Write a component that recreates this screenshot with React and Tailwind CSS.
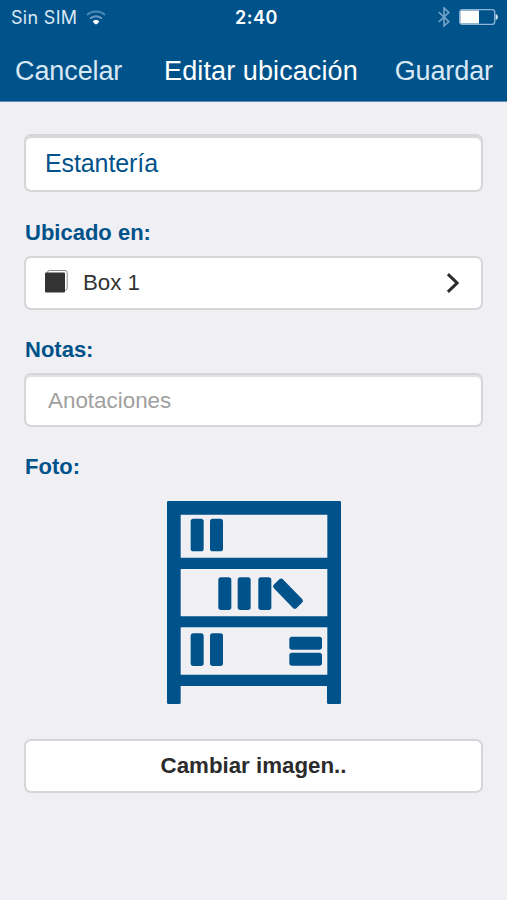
// App.jsx — StatusBar, NavBar, form fields and the location edit screen
import React from 'react';

function StatusBar() {
  return (
    <div className="grid grid-cols-[1fr_auto_1fr] items-center h-[35px] pl-[11px] pr-[9px] font-['Inter',sans-serif] text-[18px] text-[#d9e8f5]">
      <div className="flex items-center gap-[9px]">
        <span className="whitespace-nowrap tracking-[0.3px]">Sin SIM</span>
        <svg className="w-[20px] h-[15px] -mt-[1px]" viewBox="0 0 20 15" fill="none">
          <path d="M1 5C6 .4 14 .4 19 5" stroke="#4f88b5" strokeWidth="2" />
          <path d="M4.1 8.4c3.4-3 8.4-3 11.8 0" stroke="#6a9cc4" strokeWidth="2" />
          <path d="M6.9 11.6c.4-2 5.8-2 6.2 0 0 .8-2.2 2.9-3.1 2.9s-3.1-2.1-3.1-2.9z" fill="#fff" />
        </svg>
      </div>
      <span className="pl-[4px] text-center font-semibold tracking-[0.5px] text-white">2:40</span>
      <div className="flex items-center justify-end gap-[9px]">
        <svg className="w-[12px] h-[20px] -mt-[1px]" viewBox="0 0 12 20" fill="none" stroke="#6f9fc5" strokeWidth="1.7">
          <path d="M.8 5.2l10 9.4L6 19V1l4.8 4.4-10 9.4" />
        </svg>
        <svg className="w-[39px] h-[16px] -mt-[1px]" viewBox="0 0 39 16" fill="none">
          <rect x=".7" y=".7" width="35" height="14.6" rx="2.6" stroke="#8fb5d4" strokeWidth="1.3" />
          <path d="M3 1.4h17v13.2H3A1.5 1.5 0 0 1 1.4 13V3A1.5 1.5 0 0 1 3 1.4z" fill="#fff" />
          <path d="M36.6 5c3 .6 3 5.4 0 6z" fill="#d9e8f5" />
        </svg>
      </div>
    </div>
  );
}

function NavBar() {
  return (
    <div className="flex items-center justify-between h-[66px] pl-[15px] pr-[14px] pt-[6px] text-[27px] text-[#d9e8f5]">
      <button className="tracking-[-0.1px]">Cancelar</button>
      <h1 className="pl-[5px] tracking-[0.1px] text-white">Editar ubicación</h1>
      <button className="tracking-[-0.1px]">Guardar</button>
    </div>
  );
}

function Label({ children }) {
  return <span className="block pl-px text-[22px] leading-[26px] font-bold text-[#00528a]">{children}</span>;
}

function BoxIcon() {
  return (
    <svg className="w-[24px] h-[24px] -mt-[5px]" viewBox="0 0 24 24" fill="none">
      <rect x="2.5" y="1.5" width="19.7" height="19.7" rx="2" fill="#fff" stroke="#8a8a8a" />
      <rect x="0" y="3.5" width="20" height="20" rx="1" fill="#333" />
    </svg>
  );
}

function ShelfIcon() {
  return (
    <svg className="w-[174px] h-[203px]" viewBox="0 0 522 609" fill="#00528a">
      <path
        fillRule="evenodd"
        d="M4 0H518a4 4 0 0 1 4 4V605a4 4 0 0 1-4 4H484a4 4 0 0 1-4-4V555H41V605a4 4 0 0 1-4 4H4a4 4 0 0 1-4-4V4a4 4 0 0 1 4-4zM41 41V170H481V41zM41 204V346H481V204zM41 379V521H481V379z"
      />
      {/* top shelf */}
      <rect x="71" y="53" width="39" height="98" rx="8" />
      <rect x="129" y="53" width="39" height="98" rx="8" />
      {/* middle shelf */}
      <rect x="154" y="229" width="39" height="98" rx="8" />
      <rect x="212" y="229" width="39" height="98" rx="8" />
      <rect x="274" y="229" width="39" height="98" rx="8" />
      <rect x="344" y="229" width="38" height="98" rx="8" transform="rotate(-44 363 278)" />
      {/* bottom shelf */}
      <rect x="71" y="397" width="39" height="98" rx="8" />
      <rect x="129" y="397" width="39" height="98" rx="8" />
      <rect x="367" y="407" width="98" height="39" rx="8" />
      <rect x="367" y="455" width="98" height="39" rx="8" />
    </svg>
  );
}

export default function App() {
  const [name, setName] = React.useState('Estantería');
  const [notes, setNotes] = React.useState('');
  return (
    <div className="min-h-[900px] bg-[#efeff4] font-['Liberation_Sans',Arial,sans-serif]">
      <header className="h-[102px] bg-[#00528a] border-b border-[#5f8fb5]">
        <StatusBar />
        <NavBar />
      </header>

      <main className="flex flex-col px-[24px] pt-[32px]">
        <input
          value={name}
          onChange={(e) => setName(e.target.value)}
          className="w-full h-[58px] pl-[19px] rounded-[7px] border-2 border-[#d6d6d9] bg-white text-[25px] tracking-[-0.1px] text-[#00528a] shadow-[inset_0_2px_1px_#d6d6d8] outline-none"
        />

        <div className="mt-[28px]">
          <Label>Ubicado en:</Label>
          <button className="mt-[10px] flex items-center w-full h-[54px] pl-[19px] pr-[21px] rounded-[7px] border-2 border-[#d6d6d9] bg-white text-[22.3px] text-[#333]">
            <BoxIcon />
            <span className="ml-[14px]">Box 1</span>
            <svg className="ml-auto w-[14px] h-[20px]" viewBox="0 0 14 20" fill="none" stroke="#2b2b2b" strokeWidth="3">
              <path d="M1.9 1.2l9.2 8.8-9.2 8.8" />
            </svg>
          </button>
        </div>

        <div className="mt-[27px]">
          <Label>Notas:</Label>
          <input
            value={notes}
            onChange={(e) => setNotes(e.target.value)}
            placeholder="Anotaciones"
            className="mt-[10px] block w-full h-[54px] pl-[22px] pt-[1px] rounded-[7px] border-2 border-[#d6d6d9] bg-white text-[22.4px] text-[#333] placeholder:text-[#a0a0a0] shadow-[inset_0_2px_1px_#e2e2e4] outline-none"
          />
        </div>

        <div className="mt-[27px]">
          <Label>Foto:</Label>
          <div className="mt-[21px] flex justify-center">
            <ShelfIcon />
          </div>
          <button className="mt-[35px] w-full h-[54px] rounded-[7px] border-2 border-[#d6d6d9] bg-white text-[22.3px] font-bold text-[#2b2b2b]">
            Cambiar imagen..
          </button>
        </div>
      </main>
    </div>
  );
}
